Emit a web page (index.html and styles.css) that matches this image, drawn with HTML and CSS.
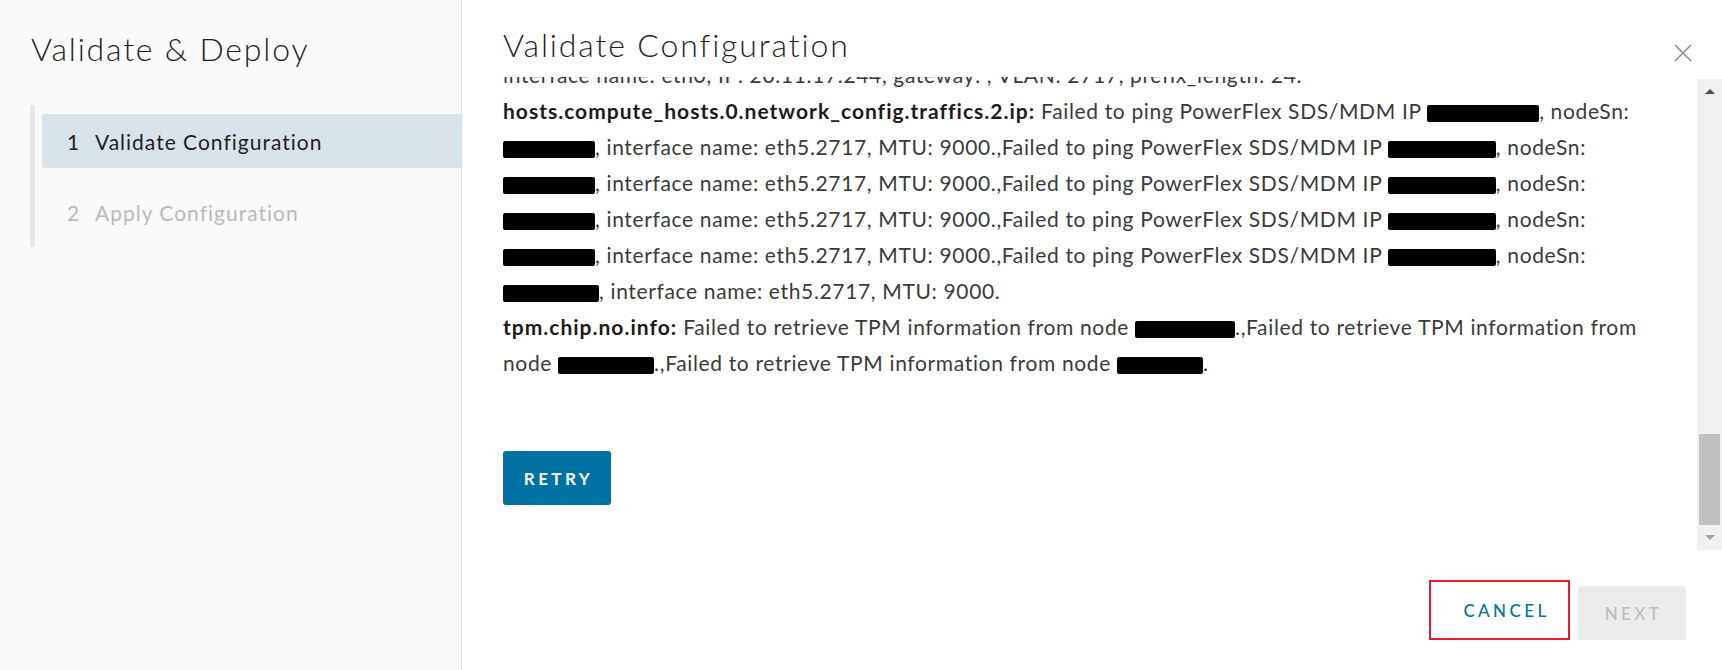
FILE: index.html
```html
<!DOCTYPE html>
<html lang="en">
<head>
<meta charset="utf-8">
<title>Validate &amp; Deploy</title>
<link rel="stylesheet" href="styles.css">
</head>
<body>
<div class="wizard">
  <aside class="sidebar">
    <h2 class="wizard-title">Validate &amp; Deploy</h2>
    <ol class="steps">
      <li class="step active"><span class="num">1</span><span>Validate Configuration</span></li>
      <li class="step disabled"><span class="num">2</span><span>Apply Configuration</span></li>
    </ol>
  </aside>
  <main class="main">
    <header class="header">
      <h1 class="title">Validate Configuration</h1>
      <button class="close" aria-label="Close">
        <svg viewBox="0 0 18 18" width="18" height="18"><path d="M1 1L17 17M17 1L1 17" stroke="#8a8a8a" stroke-width="1.5" fill="none"/></svg>
      </button>
    </header>
    <section class="body">
      <div class="scroll">
        <div class="content">
          <p>interface name: eth0, IP: 20.11.17.244, gateway: , VLAN: 2717, prefix_length: 24.</p>
          <p><strong>hosts.compute_hosts.0.network_config.traffics.2.ip:</strong> Failed to ping PowerFlex SDS/MDM IP <span class="redact r112"></span>, nodeSn:<br><span class="redact r92"></span>, interface name: eth5.2717, MTU: 9000.,Failed to ping PowerFlex SDS/MDM IP <span class="redact r108"></span>, nodeSn:<br><span class="redact r92"></span>, interface name: eth5.2717, MTU: 9000.,Failed to ping PowerFlex SDS/MDM IP <span class="redact r108"></span>, nodeSn:<br><span class="redact r92"></span>, interface name: eth5.2717, MTU: 9000.,Failed to ping PowerFlex SDS/MDM IP <span class="redact r108"></span>, nodeSn:<br><span class="redact r92"></span>, interface name: eth5.2717, MTU: 9000.,Failed to ping PowerFlex SDS/MDM IP <span class="redact r108"></span>, nodeSn:<br><span class="redact r96"></span>, interface name: eth5.2717, MTU: 9000.</p>
          <p><strong>tpm.chip.no.info:</strong> Failed to retrieve TPM information from node <span class="redact r100"></span>.,Failed to retrieve TPM information from<br>node <span class="redact r96"></span>.,Failed to retrieve TPM information from node <span class="redact r86"></span>.</p>
          <button class="btn btn-primary">RETRY</button>
        </div>
      </div>
      <div class="scrollbar">
        <span class="sb-btn"><span class="arrow up"></span></span>
        <div class="track"><div class="thumb"></div></div>
        <span class="sb-btn"><span class="arrow down"></span></span>
      </div>
    </section>
    <footer class="footer">
      <button class="btn btn-cancel">CANCEL</button>
      <button class="btn btn-next" disabled>NEXT</button>
    </footer>
  </main>
</div>
</body>
</html>
```
FILE: styles.css
```css
* { box-sizing: border-box; }
html, body { margin: 0; height: 100%; }
body {
  font-family: Lato, "Open Sans", sans-serif;
  color: #3a3a3a;
  background: #fff;
}
.wizard { display: flex; height: 670px; overflow: hidden; }

/* sidebar */
.sidebar {
  width: 462px;
  flex: none;
  background: #fafafa;
  border-right: 1px solid #dedede;
  padding: 29px 0 0 30px;
}
.wizard-title {
  margin: 0 0 36px 1px;
  font-size: 32px;
  font-weight: 300;
  line-height: 40px;
  color: #1f1f1f;
  letter-spacing: 1.8px;
}
.steps {
  list-style: none;
  margin: 0;
  padding: 9px 0 8px 7px;
  border-left: 5px solid #e8e8e8;
  display: flex;
  flex-direction: column;
  gap: 17px;
}
.step {
  height: 54px;
  display: flex;
  align-items: center;
  padding-left: 25px;
  font-size: 21px;
  letter-spacing: 1px;
  border-radius: 3px 0 0 3px;
}
.step .num { width: 28px; }
.step.active { background: #d8e3e9; color: #1f1f1f; }
.step.disabled { color: #b9b9b9; }

/* main */
.main { flex: 1; display: flex; flex-direction: column; min-width: 0; }
.header {
  height: 77px;
  flex: none;
  display: flex;
  justify-content: space-between;
  align-items: flex-start;
  padding: 25px 30px 0 41px;
}
.title {
  margin: 0;
  font-size: 32px;
  font-weight: 300;
  line-height: 40px;
  color: #1f1f1f;
  letter-spacing: 1.85px;
}
.close {
  margin-top: 19px;
  width: 18px;
  height: 18px;
  padding: 0;
  border: 0;
  background: none;
  display: block;
}
.close svg { display: block; }

.body { flex: 1; display: flex; min-height: 0; }
.scroll { flex: 1; overflow: hidden; padding-left: 41px; }
.content {
  margin-top: -20px;
  font-size: 21px;
  line-height: 36px;
  letter-spacing: 0.65px;
}
.content p { margin: 0; white-space: nowrap; }
.content strong { font-weight: 700; color: #1b1b1b; letter-spacing: 1px; }
.redact {
  display: inline-block;
  height: 17px;
  background: #000;
  vertical-align: -3px;
  border-radius: 2px;
}
.r86 { width: 86px; }
.r92 { width: 92px; }
.r96 { width: 96px; }
.r100 { width: 100px; }
.r108 { width: 108px; }
.r112 { width: 112px; }

.btn {
  font-family: inherit;
  font-size: 17px;
  letter-spacing: 0.2em;
  border-radius: 3px;
  height: 54px;
  padding: 0;
  display: flex;
  align-items: center;
  justify-content: center;
}
.btn-primary {
  margin-top: 70px;
  width: 108px;
  background: #0072a3;
  color: #fff;
  border: 0;
  font-weight: 700;
  padding-left: 3px;
}

/* fake scrollbar */
.scrollbar {
  width: 25px;
  flex: none;
  margin-top: 2px;
  background: #f1f1f1;
  display: flex;
  flex-direction: column;
}
.sb-btn {
  height: 25px;
  flex: none;
  display: flex;
  align-items: center;
  justify-content: center;
}
.arrow { width: 0; height: 0; border-left: 5px solid transparent; border-right: 5px solid transparent; }
.arrow.up { border-bottom: 5px solid #505050; }
.arrow.down { border-top: 5px solid #a3a3a3; }
.track { flex: 1; display: flex; flex-direction: column; }
.thumb { margin: auto 2px 0; height: 91px; background: #c1c1c1; }

/* footer */
.footer {
  height: 120px;
  flex: none;
  display: flex;
  justify-content: flex-end;
  align-items: flex-end;
  gap: 8px;
  padding: 0 36px 30px 0;
}
.btn-cancel {
  width: 141px;
  height: 60px;
  border: 2px solid #e8192c;
  border-radius: 0;
  background: #fff;
  color: #0072a3;
  font-weight: 500;
  padding-left: 14px;
}
.btn-next {
  width: 108px;
  background: #ebebeb;
  color: #bdbdbd;
  border: 0;
  font-weight: 500;
  padding-left: 3px;
}
```
